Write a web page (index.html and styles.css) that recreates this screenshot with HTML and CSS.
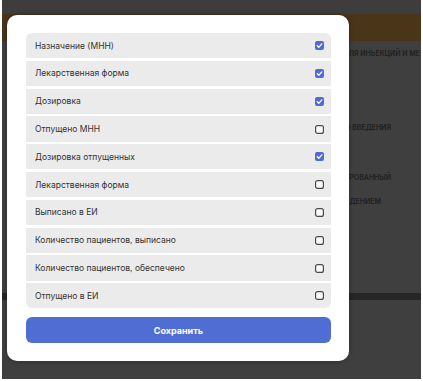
FILE: index.html
```html
<!DOCTYPE html>
<html lang="ru">
<head>
  <meta charset="UTF-8" />
  <meta name="viewport" content="width=device-width, initial-scale=1" />
  <title>Настройка колонок</title>
  <link rel="stylesheet" href="styles.css">
</head>
<body>
  <div class="page">
    <div class="topbar"></div>
    <div class="headband"></div>
    <div class="table-bg">
      <p class="cell-bg line-1">Раствор для иньекций и ме</p>
      <p class="cell-bg line-2">Для подкожного введения</p>
      <p class="cell-bg line-3">Пролонгированный</p>
      <p class="cell-bg line-4">С замедленным высвобождением</p>
    </div>
    <div class="footer-band"></div>

    <div class="modal">
      <ul class="columns">
        <li class="column-row">
          <span>Назначение (МНН)</span>
          <svg class="check" viewBox="0 0 9 9"><rect x="0" y="0" width="9" height="9" rx="2" fill="#4f6bd6"/><path d="M2.2 4.7 L3.8 6.2 L6.9 2.9" fill="none" stroke="#fff" stroke-width="1.3" stroke-linecap="round" stroke-linejoin="round"/></svg>
        </li>
        <li class="column-row">
          <span>Лекарственная форма</span>
          <svg class="check" viewBox="0 0 9 9"><rect x="0" y="0" width="9" height="9" rx="2" fill="#4f6bd6"/><path d="M2.2 4.7 L3.8 6.2 L6.9 2.9" fill="none" stroke="#fff" stroke-width="1.3" stroke-linecap="round" stroke-linejoin="round"/></svg>
        </li>
        <li class="column-row">
          <span>Дозировка</span>
          <svg class="check" viewBox="0 0 9 9"><rect x="0" y="0" width="9" height="9" rx="2" fill="#4f6bd6"/><path d="M2.2 4.7 L3.8 6.2 L6.9 2.9" fill="none" stroke="#fff" stroke-width="1.3" stroke-linecap="round" stroke-linejoin="round"/></svg>
        </li>
        <li class="column-row">
          <span>Отпущено МНН</span>
          <svg class="check" viewBox="0 0 9 9"><rect x="0.6" y="0.6" width="7.8" height="7.8" rx="2" fill="#fafafa" stroke="#4a4a4a" stroke-width="1.2"/></svg>
        </li>
        <li class="column-row">
          <span>Дозировка отпущенных</span>
          <svg class="check" viewBox="0 0 9 9"><rect x="0" y="0" width="9" height="9" rx="2" fill="#4f6bd6"/><path d="M2.2 4.7 L3.8 6.2 L6.9 2.9" fill="none" stroke="#fff" stroke-width="1.3" stroke-linecap="round" stroke-linejoin="round"/></svg>
        </li>
        <li class="column-row">
          <span>Лекарственная форма</span>
          <svg class="check" viewBox="0 0 9 9"><rect x="0.6" y="0.6" width="7.8" height="7.8" rx="2" fill="#fafafa" stroke="#4a4a4a" stroke-width="1.2"/></svg>
        </li>
        <li class="column-row">
          <span>Выписано в ЕИ</span>
          <svg class="check" viewBox="0 0 9 9"><rect x="0.6" y="0.6" width="7.8" height="7.8" rx="2" fill="#fafafa" stroke="#4a4a4a" stroke-width="1.2"/></svg>
        </li>
        <li class="column-row">
          <span>Количество пациентов, выписано</span>
          <svg class="check" viewBox="0 0 9 9"><rect x="0.6" y="0.6" width="7.8" height="7.8" rx="2" fill="#fafafa" stroke="#4a4a4a" stroke-width="1.2"/></svg>
        </li>
        <li class="column-row">
          <span>Количество пациентов, обеспечено</span>
          <svg class="check" viewBox="0 0 9 9"><rect x="0.6" y="0.6" width="7.8" height="7.8" rx="2" fill="#fafafa" stroke="#4a4a4a" stroke-width="1.2"/></svg>
        </li>
        <li class="column-row">
          <span>Отпущено в ЕИ</span>
          <svg class="check" viewBox="0 0 9 9"><rect x="0.6" y="0.6" width="7.8" height="7.8" rx="2" fill="#fafafa" stroke="#4a4a4a" stroke-width="1.2"/></svg>
        </li>
      </ul>
      <button class="save-button">Сохранить</button>
    </div>
  </div>
</body>
</html>
```

FILE: styles.css
```css
body {
  margin: 0;
  background: #ffffff;
  font-family: Inter, 'Noto Sans', sans-serif;
}

.page {
  position: relative;
  margin-left: 2px;
  width: 419px;
  height: 379px;
  overflow: hidden;
  background: #3f3f3f;
  display: flex;
  flex-direction: column;
}

.topbar {
  height: 14px;
  background: #3d3d3d;
}

.headband {
  height: 27px;
  background: #4a3519;
}

.table-bg {
  height: 252px;
}

/* text of the table behind the dialog, mostly hidden */
.cell-bg {
  margin: 0;
  white-space: nowrap;
  font-size: 7px;
  font-weight: 600;
  text-transform: uppercase;
  color: #1e1e1e;
  text-align: right;
}

.line-1 {
  margin-top: 8px;
  margin-right: 1px;
}

.line-2 {
  margin-top: 65px;
  margin-right: 30px;
}

.line-3 {
  margin-top: 41px;
  margin-right: 30px;
}

.line-4 {
  margin-top: 15px;
  margin-right: 40px;
}

.footer-band {
  height: 7px;
  background: #262626;
}

.modal {
  position: absolute;
  left: 5px;
  top: 15px;
  width: 305px;
  height: 310px;
  padding: 18px 18px 18px 19px;
  background: #ffffff;
  border-radius: 10px;
  box-shadow: 0 0 5px rgba(0, 0, 0, 0.35);
  display: flex;
  flex-direction: column;
  gap: 9px;
}

.columns {
  list-style: none;
  margin: 0;
  padding: 0;
  display: flex;
  flex-direction: column;
  gap: 2.5px;
  border-radius: 6px;
  overflow: hidden;
}

.column-row {
  height: 25.3px;
  display: flex;
  align-items: center;
  justify-content: space-between;
  padding: 0 7px 0 9px;
  background: #ebebeb;
  font-size: 8.5px;
  color: #333333;
}

.check {
  width: 9px;
  height: 9px;
}

.save-button {
  height: 25.5px;
  border: none;
  border-radius: 6px;
  background: #506dd4;
  color: #ffffff;
  font-family: Inter, 'Noto Sans', sans-serif;
  font-size: 9px;
  font-weight: 700;
  cursor: pointer;
}
```
